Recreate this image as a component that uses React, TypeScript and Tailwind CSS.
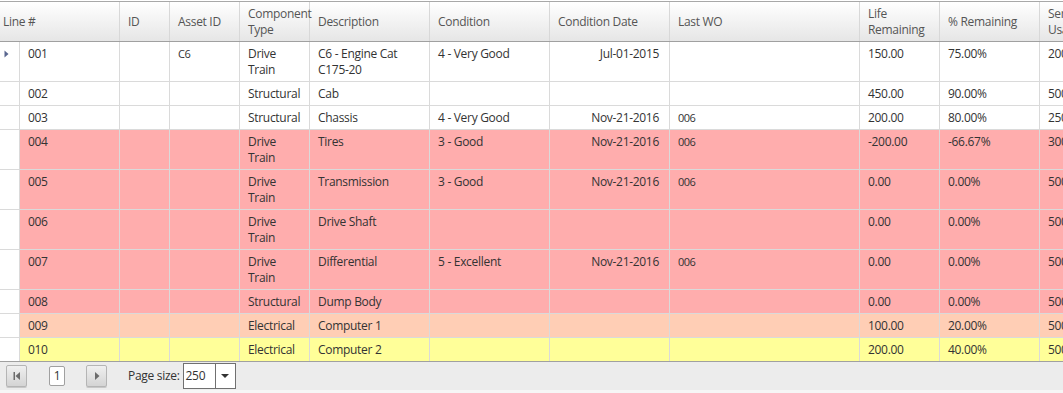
import { ReactNode } from "react";

type Col = { key: string; label: ReactNode; w: string; right?: boolean; small?: boolean };

const columns: Col[] = [
  { key: "line", label: "Line #", w: "w-[100px]" },
  { key: "id", label: "ID", w: "w-[50px]" },
  { key: "asset", label: "Asset ID", w: "w-[70px]", small: true },
  { key: "type", label: <>Component<br />Type</>, w: "w-[70px]" },
  { key: "desc", label: "Description", w: "w-[120px]" },
  { key: "cond", label: "Condition", w: "w-[120px]" },
  { key: "date", label: "Condition Date", w: "w-[120px]", right: true },
  { key: "wo", label: "Last WO", w: "w-[190px]", small: true },
  { key: "life", label: <>Life<br />Remaining</>, w: "w-[80px]" },
  { key: "pct", label: "% Remaining", w: "w-[100px]" },
  { key: "usage", label: <>Service<br />Usage</>, w: "w-[100px]" },
];

type Row = {
  tall?: boolean;
  bg: string;
  cells: Record<string, ReactNode>;
};

const rows: Row[] = [
  {
    tall: true,
    bg: "bg-white",
    cells: {
      line: "001", asset: "C6", type: <>Drive<br />Train</>, desc: <>C6 - Engine Cat<br />C175-20</>,
      cond: "4 - Very Good", date: "Jul-01-2015", life: "150.00", pct: "75.00%", usage: "200.00",
    },
  },
  { bg: "bg-white", cells: { line: "002", type: "Structural", desc: "Cab", life: "450.00", pct: "90.00%", usage: "500.00" } },
  {
    bg: "bg-white",
    cells: { line: "003", type: "Structural", desc: "Chassis", cond: "4 - Very Good", date: "Nov-21-2016", wo: "006", life: "200.00", pct: "80.00%", usage: "250.00" },
  },
  {
    tall: true,
    bg: "bg-[#ffadad]",
    cells: { line: "004", type: <>Drive<br />Train</>, desc: "Tires", cond: "3 - Good", date: "Nov-21-2016", wo: "006", life: "-200.00", pct: "-66.67%", usage: "300.00" },
  },
  {
    tall: true,
    bg: "bg-[#ffadad]",
    cells: { line: "005", type: <>Drive<br />Train</>, desc: "Transmission", cond: "3 - Good", date: "Nov-21-2016", wo: "006", life: "0.00", pct: "0.00%", usage: "500.00" },
  },
  {
    tall: true,
    bg: "bg-[#ffadad]",
    cells: { line: "006", type: <>Drive<br />Train</>, desc: "Drive Shaft", life: "0.00", pct: "0.00%", usage: "500.00" },
  },
  {
    tall: true,
    bg: "bg-[#ffadad]",
    cells: { line: "007", type: <>Drive<br />Train</>, desc: "Differential", cond: "5 - Excellent", date: "Nov-21-2016", wo: "006", life: "0.00", pct: "0.00%", usage: "500.00" },
  },
  { bg: "bg-[#ffadad]", cells: { line: "008", type: "Structural", desc: "Dump Body", life: "0.00", pct: "0.00%", usage: "500.00" } },
  { bg: "bg-[#ffceb5]", cells: { line: "009", type: "Electrical", desc: "Computer 1", life: "100.00", pct: "20.00%", usage: "500.00" } },
  { bg: "bg-[#ffff99]", cells: { line: "010", type: "Electrical", desc: "Computer 2", life: "200.00", pct: "40.00%", usage: "500.00" } },
];

function PagerButton({ dir }: { dir: "first" | "next" }) {
  return (
    <button className="w-[21px] h-[22px] rounded-[2px] border border-[#b5b5b5] bg-gradient-to-b from-[#f0f0f0] to-[#d4d4d4] shadow-[0_1px_0_#c8c8c8] flex items-center justify-center">
      <svg width="8" height="10" viewBox="0 0 8 10">
        {dir === "first" ? (
          <>
            <rect x="0.5" y="1" width="1.5" height="8" fill="#6b6b6b" />
            <path d="M7 1 L2.5 5 L7 9 Z" fill="#6b6b6b" />
          </>
        ) : (
          <path d="M2 1 L6.5 5 L2 9 Z" fill="#6b6b6b" />
        )}
      </svg>
    </button>
  );
}

export default function App() {
  return (
    <div className="w-[1063px] h-[393px] overflow-hidden bg-white pt-px text-[#333] font-['Open_Sans','Noto_Sans',sans-serif] text-[12px] leading-4 tracking-[-0.3px]">
      <div className="w-[1140px]">
        {/* Header */}
        <div className="flex h-[41px] border-t border-b border-t-[#a8a8a8] border-b-[#a0a0a0] bg-gradient-to-b from-white to-[#e6e6e6] text-[#555]">
          {columns.map((c, i) => (
            <div
              key={c.key}
              className={`${i === 0 ? "w-[120px] pl-[3px]" : `${c.w} pl-2`} shrink-0 border-r border-[#d8d8d8] flex items-center`}
            >
              <span>{c.label}</span>
            </div>
          ))}
        </div>

        {/* Body */}
        {rows.map((r, ri) => (
          <div
            key={ri}
            className={`flex ${r.tall ? "h-[40px]" : ri === rows.length - 1 ? "h-[23px]" : "h-[24px]"} ${r.bg} ${ri === rows.length - 1 ? "" : "border-b border-[#dadada]"} box-border`}
          >
            <div className="w-[20px] shrink-0 border-r border-[#dadada] bg-white pt-[8px] pl-[4px]">
              {ri === 0 && (
                <svg width="5" height="8" viewBox="0 0 5 8">
                  <path d="M0.5 0.5 L4.5 4 L0.5 7.5 Z" fill="#5a6790" />
                </svg>
              )}
            </div>
            {columns.map((c) => (
              <div
                key={c.key}
                className={`${c.w} shrink-0 border-r border-[#dadada] pt-1 ${c.right ? "text-right pr-[10px]" : "pl-2"} ${c.small ? "text-[11px] tracking-[-0.5px]" : ""}`}
              >
                {r.cells[c.key]}
              </div>
            ))}
          </div>
        ))}
      </div>

      {/* Pager */}
      <div className="h-[29px] border-t border-[#a0a0a0] bg-[#ececec] flex items-center pl-[6px] text-[#333]">
        <PagerButton dir="first" />
        <div className="ml-[22px] w-[16px] h-[20px] bg-white border border-[#a0a0a0] rounded-[2px] flex items-center justify-center text-[12px]">
          1
        </div>
        <div className="ml-[21px]">
          <PagerButton dir="next" />
        </div>
        <span className="ml-[21px] text-[12px]">Page size:</span>
        <div className="ml-[3px] w-[53px] h-[26px] bg-white border border-[#707070] flex">
          <span className="flex-1 pl-[2px] flex items-center text-[12px]">250</span>
          <span className="w-[20px] border-l border-[#707070] flex items-center justify-center">
            <svg width="8" height="4" viewBox="0 0 8 4">
              <path d="M0 0 L8 0 L4 4 Z" fill="#333" />
            </svg>
          </span>
        </div>
      </div>
      <div className="h-[3px] bg-[#f6f6f6]" />
    </div>
  );
}
